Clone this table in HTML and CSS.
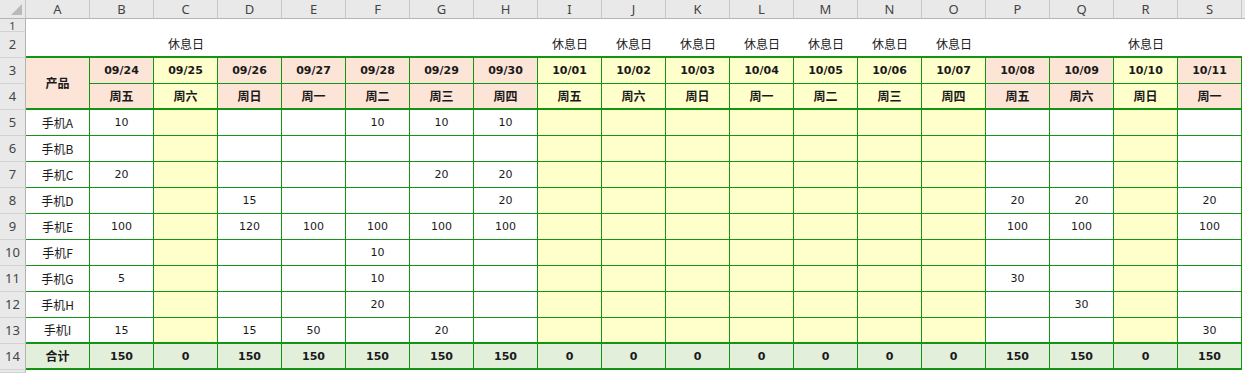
FILE: index.html
```html
<!DOCTYPE html>
<html lang="zh-CN">
<head>
<meta charset="utf-8">
<title>排产表</title>
<link rel="stylesheet" href="styles.css">
</head>
<body>
<div class="sheet">
  <!-- column headers -->
  <div class="corner"><span class="tri"></span></div>
  <div class="ch">A</div><div class="ch">B</div><div class="ch">C</div><div class="ch">D</div><div class="ch">E</div><div class="ch">F</div><div class="ch">G</div><div class="ch">H</div><div class="ch">I</div><div class="ch">J</div><div class="ch">K</div><div class="ch">L</div><div class="ch">M</div><div class="ch">N</div><div class="ch">O</div><div class="ch">P</div><div class="ch">Q</div><div class="ch">R</div><div class="ch">S</div>

  <!-- row 1 -->
  <div class="rh rh-short">1</div>
  <div class="blank"></div>

  <!-- row 2 -->
  <div class="rh">2</div>
  <div class="r2"></div><div class="r2"></div><div class="r2">休息日</div><div class="r2"></div><div class="r2"></div><div class="r2"></div><div class="r2"></div><div class="r2"></div><div class="r2">休息日</div><div class="r2">休息日</div><div class="r2">休息日</div><div class="r2">休息日</div><div class="r2">休息日</div><div class="r2">休息日</div><div class="r2">休息日</div><div class="r2"></div><div class="r2"></div><div class="r2">休息日</div><div class="r2"></div>

  <!-- row 3 -->
  <div class="rh">3</div>
  <div class="c p hd thick span2">产品</div>
  <div class="c p dt">09/24</div><div class="c y dt">09/25</div><div class="c p dt">09/26</div><div class="c p dt">09/27</div><div class="c p dt">09/28</div><div class="c p dt">09/29</div><div class="c p dt">09/30</div><div class="c y dt">10/01</div><div class="c y dt">10/02</div><div class="c y dt">10/03</div><div class="c y dt">10/04</div><div class="c y dt">10/05</div><div class="c y dt">10/06</div><div class="c y dt">10/07</div><div class="c p dt">10/08</div><div class="c p dt">10/09</div><div class="c y dt">10/10</div><div class="c p dt">10/11</div>

  <!-- row 4 -->
  <div class="rh">4</div>
  <div class="c p hd thick">周五</div><div class="c y hd thick">周六</div><div class="c p hd thick">周日</div><div class="c p hd thick">周一</div><div class="c p hd thick">周二</div><div class="c p hd thick">周三</div><div class="c p hd thick">周四</div><div class="c y hd thick">周五</div><div class="c y hd thick">周六</div><div class="c y hd thick">周日</div><div class="c y hd thick">周一</div><div class="c y hd thick">周二</div><div class="c y hd thick">周三</div><div class="c y hd thick">周四</div><div class="c p hd thick">周五</div><div class="c p hd thick">周六</div><div class="c y hd thick">周日</div><div class="c p hd thick">周一</div>

  <!-- row 5 -->
  <div class="rh">5</div>
  <div class="c lbl">手机A</div>
  <div class="c">10</div><div class="c y"></div><div class="c"></div><div class="c"></div><div class="c">10</div><div class="c">10</div><div class="c">10</div><div class="c y"></div><div class="c y"></div><div class="c y"></div><div class="c y"></div><div class="c y"></div><div class="c y"></div><div class="c y"></div><div class="c"></div><div class="c"></div><div class="c y"></div><div class="c"></div>

  <!-- row 6 -->
  <div class="rh">6</div>
  <div class="c lbl">手机B</div>
  <div class="c"></div><div class="c y"></div><div class="c"></div><div class="c"></div><div class="c"></div><div class="c"></div><div class="c"></div><div class="c y"></div><div class="c y"></div><div class="c y"></div><div class="c y"></div><div class="c y"></div><div class="c y"></div><div class="c y"></div><div class="c"></div><div class="c"></div><div class="c y"></div><div class="c"></div>

  <!-- row 7 -->
  <div class="rh">7</div>
  <div class="c lbl">手机C</div>
  <div class="c">20</div><div class="c y"></div><div class="c"></div><div class="c"></div><div class="c"></div><div class="c">20</div><div class="c">20</div><div class="c y"></div><div class="c y"></div><div class="c y"></div><div class="c y"></div><div class="c y"></div><div class="c y"></div><div class="c y"></div><div class="c"></div><div class="c"></div><div class="c y"></div><div class="c"></div>

  <!-- row 8 -->
  <div class="rh">8</div>
  <div class="c lbl">手机D</div>
  <div class="c"></div><div class="c y"></div><div class="c">15</div><div class="c"></div><div class="c"></div><div class="c"></div><div class="c">20</div><div class="c y"></div><div class="c y"></div><div class="c y"></div><div class="c y"></div><div class="c y"></div><div class="c y"></div><div class="c y"></div><div class="c">20</div><div class="c">20</div><div class="c y"></div><div class="c">20</div>

  <!-- row 9 -->
  <div class="rh">9</div>
  <div class="c lbl">手机E</div>
  <div class="c">100</div><div class="c y"></div><div class="c">120</div><div class="c">100</div><div class="c">100</div><div class="c">100</div><div class="c">100</div><div class="c y"></div><div class="c y"></div><div class="c y"></div><div class="c y"></div><div class="c y"></div><div class="c y"></div><div class="c y"></div><div class="c">100</div><div class="c">100</div><div class="c y"></div><div class="c">100</div>

  <!-- row 10 -->
  <div class="rh">10</div>
  <div class="c lbl">手机F</div>
  <div class="c"></div><div class="c y"></div><div class="c"></div><div class="c"></div><div class="c">10</div><div class="c"></div><div class="c"></div><div class="c y"></div><div class="c y"></div><div class="c y"></div><div class="c y"></div><div class="c y"></div><div class="c y"></div><div class="c y"></div><div class="c"></div><div class="c"></div><div class="c y"></div><div class="c"></div>

  <!-- row 11 -->
  <div class="rh">11</div>
  <div class="c lbl">手机G</div>
  <div class="c">5</div><div class="c y"></div><div class="c"></div><div class="c"></div><div class="c">10</div><div class="c"></div><div class="c"></div><div class="c y"></div><div class="c y"></div><div class="c y"></div><div class="c y"></div><div class="c y"></div><div class="c y"></div><div class="c y"></div><div class="c">30</div><div class="c"></div><div class="c y"></div><div class="c"></div>

  <!-- row 12 -->
  <div class="rh">12</div>
  <div class="c lbl">手机H</div>
  <div class="c"></div><div class="c y"></div><div class="c"></div><div class="c"></div><div class="c">20</div><div class="c"></div><div class="c"></div><div class="c y"></div><div class="c y"></div><div class="c y"></div><div class="c y"></div><div class="c y"></div><div class="c y"></div><div class="c y"></div><div class="c"></div><div class="c">30</div><div class="c y"></div><div class="c"></div>

  <!-- row 13 -->
  <div class="rh">13</div>
  <div class="c lbl thick">手机I</div>
  <div class="c thick">15</div><div class="c y thick"></div><div class="c thick">15</div><div class="c thick">50</div><div class="c thick"></div><div class="c thick">20</div><div class="c thick"></div><div class="c y thick"></div><div class="c y thick"></div><div class="c y thick"></div><div class="c y thick"></div><div class="c y thick"></div><div class="c y thick"></div><div class="c y thick"></div><div class="c thick"></div><div class="c thick"></div><div class="c y thick"></div><div class="c thick">30</div>

  <!-- row 14 -->
  <div class="rh">14</div>
  <div class="c t hd thick">合计</div>
  <div class="c t tn thick">150</div><div class="c t tn thick">0</div><div class="c t tn thick">150</div><div class="c t tn thick">150</div><div class="c t tn thick">150</div><div class="c t tn thick">150</div><div class="c t tn thick">150</div><div class="c t tn thick">0</div><div class="c t tn thick">0</div><div class="c t tn thick">0</div><div class="c t tn thick">0</div><div class="c t tn thick">0</div><div class="c t tn thick">0</div><div class="c t tn thick">0</div><div class="c t tn thick">150</div><div class="c t tn thick">150</div><div class="c t tn thick">0</div><div class="c t tn thick">150</div>

  <!-- row 15 (only its top edge is visible) -->
  <div class="rh"></div>
</div>
</body>
</html>
```

FILE: styles.css
```css
* {
  box-sizing: border-box;
  margin: 0;
  padding: 0;
}

html, body {
  background: #ffffff;
}

body {
  margin: 0;
  overflow: hidden;
  font-family: "DejaVu Sans", "Noto Sans CJK SC", sans-serif;
  color: #1a1a1a;
}

.sheet {
  width: 1245px;
  height: 373px;
  display: grid;
  grid-template-columns: 26px repeat(19, 64px);
  grid-template-rows: 19px 13px repeat(13, 26px) 1fr;
  background: linear-gradient(#e9e9e9, #e9e9e9) top left / 100% 18px no-repeat,
              linear-gradient(#b4b4b4, #b4b4b4) 0 18px / 100% 1px no-repeat;
  overflow: hidden;
}

.corner {
  background: #e9e9e9;
  border-right: 1px solid #c4c4c4;
  border-bottom: 1px solid #b4b4b4;
  position: relative;
}

.tri {
  position: absolute;
  right: 3px;
  bottom: 3px;
  width: 0;
  height: 0;
  border-left: 11px solid transparent;
  border-bottom: 11px solid #b9b9b9;
}

.ch {
  background: #e9e9e9;
  border-right: 1px solid #c8c8c8;
  border-bottom: 1px solid #b4b4b4;
  display: flex;
  align-items: center;
  justify-content: center;
  font-family: "Noto Sans", "DejaVu Sans", sans-serif;
  font-size: 13px;
  color: #444;
  line-height: 1;
}

.rh {
  background: #e9e9e9;
  border-right: 1px solid #b4b4b4;
  border-bottom: 1px solid #d2d2d2;
  display: flex;
  align-items: center;
  justify-content: center;
  font-family: "Noto Sans", "DejaVu Sans", sans-serif;
  font-size: 13px;
  color: #444;
  line-height: 1;
  overflow: hidden;
}

.rh-short {
  font-size: 11px;
}

.blank {
  grid-column: span 19;
  background: #fff;
}

.r2 {
  background: #fff;
  border-bottom: 2px solid #149414;
  display: flex;
  align-items: center;
  justify-content: center;
  font-family: "Noto Sans CJK SC", sans-serif;
  font-size: 12px;
  color: #1a1a1a;
  padding-bottom: 1px;
}

.c {
  background: #fff;
  border-right: 1px solid #149414;
  border-bottom: 1px solid #149414;
  display: flex;
  align-items: center;
  justify-content: center;
  font-family: "DejaVu Sans", sans-serif;
  font-size: 11px;
  color: #1a1a1a;
  line-height: 1;
}

.c.y {
  background: #ffffcc;
}

.c.p {
  background: #fce4d6;
}

.c.t {
  background: #e2efda;
}

.c.thick {
  border-bottom-width: 2px;
}

.span2 {
  grid-row: span 2;
}

.c.dt {
  font-family: "DejaVu Sans", sans-serif;
  font-weight: bold;
  font-size: 11px;
}

.c.hd {
  font-family: "Noto Sans CJK SC", sans-serif;
  font-weight: bold;
  font-size: 12px;
}

.c.lbl {
  font-family: "Noto Sans CJK SC", sans-serif;
  font-size: 12px;
}

.c.tn {
  font-family: "DejaVu Sans", sans-serif;
  font-weight: bold;
  font-size: 11px;
}
```
